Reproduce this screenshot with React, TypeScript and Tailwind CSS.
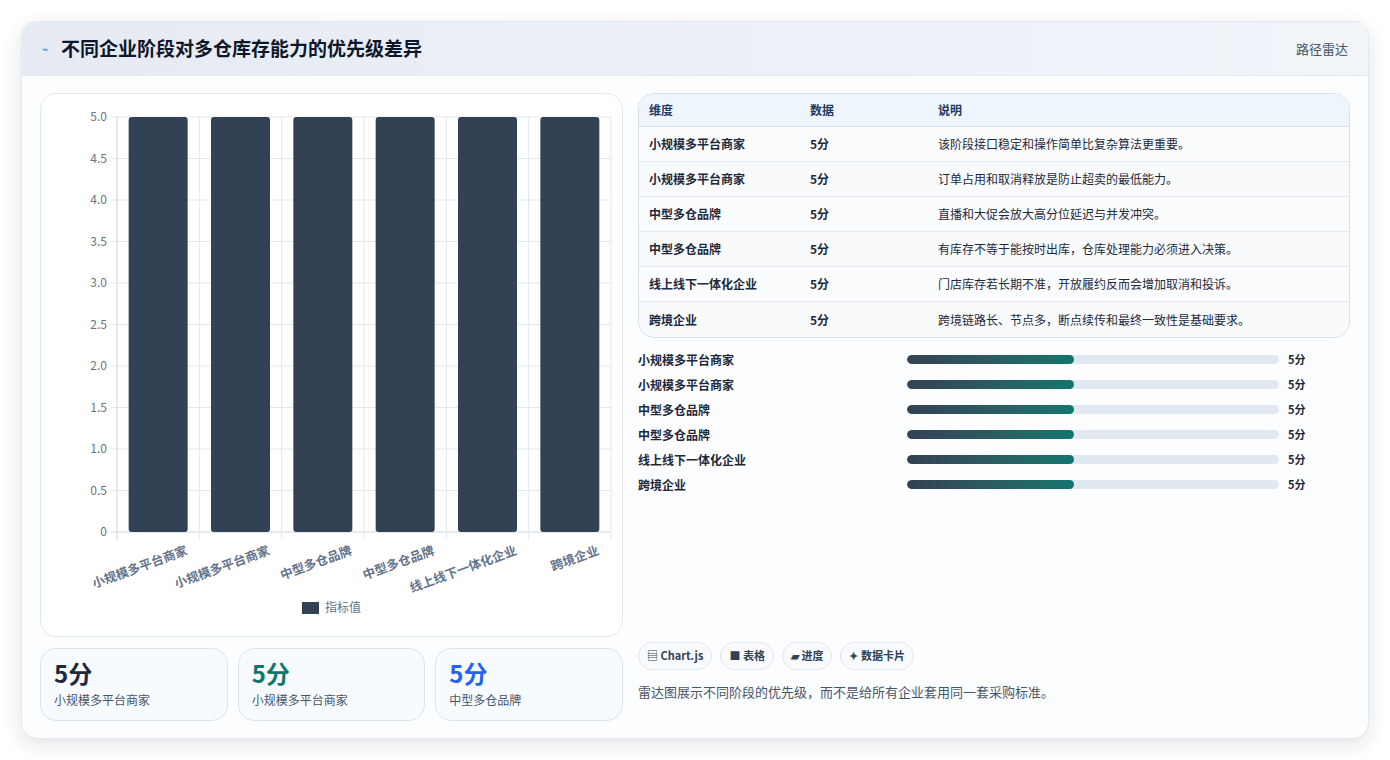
import React from "react";

const rows = [
  ["小规模多平台商家", "5分", "该阶段接口稳定和操作简单比复杂算法更重要。"],
  ["小规模多平台商家", "5分", "订单占用和取消释放是防止超卖的最低能力。"],
  ["中型多仓品牌", "5分", "直播和大促会放大高分位延迟与并发冲突。"],
  ["中型多仓品牌", "5分", "有库存不等于能按时出库，仓库处理能力必须进入决策。"],
  ["线上线下一体化企业", "5分", "门店库存若长期不准，开放履约反而会增加取消和投诉。"],
  ["跨境企业", "5分", "跨境链路长、节点多，断点续传和最终一致性是基础要求。"],
];

const font = { fontFamily: '"Noto Sans CJK SC", "Liberation Sans", sans-serif' };

function Chart() {
  const L = 76, R = 570, T = 23, B = 438;
  const cw = (R - L) / 6;
  const ticks = [5, 4.5, 4, 3.5, 3, 2.5, 2, 1.5, 1, 0.5, 0];
  return (
    <svg width="580" height="540" className="block" style={font}>
      {ticks.map((t, i) => {
        const y = T + (i * (B - T)) / 10;
        return (
          <g key={i}>
            <line x1={L - 6} x2={R} y1={y} y2={y} stroke={i === 10 ? "#cbd5e1" : "#e5e7eb"} />
            <text x={L - 10} y={y + 4} textAnchor="end" fontSize="12" fill="#6b7280">
              {t === 0 ? "0" : t.toFixed(1)}
            </text>
          </g>
        );
      })}
      {Array.from({ length: 7 }).map((_, i) => (
        <line key={i} x1={L + i * cw} x2={L + i * cw} y1={T} y2={B + 8} stroke={i === 0 ? "#cbd5e1" : "#e5e7eb"} />
      ))}
      {rows.map((r, i) => {
        const cx = L + i * cw + cw / 2;
        return (
          <g key={i}>
            <rect x={cx - 29.5} y={T} width={59} height={B - T} rx={3} fill="#334155" />
            <text
              transform={`translate(${cx + 30},${B + 22}) rotate(-20)`}
              textAnchor="end"
              fontSize="12.5"
              fontWeight="600"
              fill="#64748b"
            >
              {r[0]}
            </text>
          </g>
        );
      })}
      <rect x={261} y={508} width={17} height={12} fill="#334155" />
      <text x={284} y={518} fontSize="12" fill="#64748b">指标值</text>
    </svg>
  );
}

export default function App() {
  return (
    <div className="w-[1390px] h-[760px] bg-white pt-[21px] px-[21px]" style={font}>
      <div className="w-[1348px] h-[718px] rounded-2xl border border-[#e2e8f0] bg-[#fcfdfe] shadow-[0_6px_20px_rgba(15,23,42,0.12)] overflow-hidden flex flex-col">
        <div className="h-[54px] shrink-0 flex items-center justify-between px-5 bg-gradient-to-r from-[#e6ebf3] to-[#f1f4f9] border-b border-[#e5e9f0]">
          <div className="flex items-center gap-3">
            <span className="text-[#3b82f6] text-[11px]">⌁</span>
            <span className="text-[19px] font-bold text-[#0f172a]">不同企业阶段对多仓库存能力的优先级差异</span>
          </div>
          <span className="text-[13px] text-[#475569]">路径雷达</span>
        </div>
        <div className="flex gap-[15px] px-[18px] pt-[17px]">
          <div className="w-[583px] flex flex-col gap-[11px]">
            <div className="h-[544px] rounded-2xl border border-[#e2e8f0] bg-white">
              <Chart />
            </div>
            <div className="flex gap-[10px]">
              {[
                ["text-[#1e293b]", "小规模多平台商家"],
                ["text-[#0f766e]", "小规模多平台商家"],
                ["text-[#2563eb]", "中型多仓品牌"],
              ].map(([c, l], i) => (
                <div key={i} className="w-[188px] h-[73px] rounded-2xl border border-[#dbe5f1] bg-[#f8fbfe] px-[13px] pt-[9px]">
                  <div className={`text-[24px] font-bold leading-[30px] ${c}`}>5分</div>
                  <div className="text-[12px] text-[#475569] mt-[3px]">{l}</div>
                </div>
              ))}
            </div>
          </div>
          <div className="flex-1 flex flex-col">
            <div className="rounded-2xl border border-[#d6e0ec] overflow-hidden bg-white">
              <div className="h-[33px] flex items-center bg-[#eef5fd] border-b border-[#d6e0ec] text-[12px] font-bold text-[#1e3a5f]">
                <div className="w-[171px] pl-[10px]">维度</div>
                <div className="w-[128px]">数据</div>
                <div className="flex-1">说明</div>
              </div>
              {rows.map((r, i) => (
                <div key={i} className={`h-[35px] flex items-center text-[12px] text-[#1e293b] ${i % 2 === 1 ? "bg-[#f8fafc]" : "bg-[#fbfcfd]"} ${i < 5 ? "border-b border-[#e5e9f0]" : ""}`}>
                  <div className="w-[171px] pl-[10px] font-semibold">{r[0]}</div>
                  <div className="w-[128px] font-semibold">{r[1]}</div>
                  <div className="flex-1">{r[2]}</div>
                </div>
              ))}
            </div>
            <div className="mt-[9px] flex flex-col">
              {rows.map((r, i) => (
                <div key={i} className="h-[25px] flex items-center text-[12px] font-semibold text-[#1e293b]">
                  <div className="w-[269px]">{r[0]}</div>
                  <div className="w-[372px] h-[9px] rounded-full bg-[#e2e8f0] overflow-hidden">
                    <div className="h-full rounded-full bg-gradient-to-r from-[#334155] to-[#0f766e]" style={{ width: "45%" }} />
                  </div>
                  <div className="ml-[9px] text-[11px]">5分</div>
                </div>
              ))}
            </div>
            <div className="mt-auto flex flex-col gap-[12px] pb-[20px]">
              <div className="flex gap-[8px] text-[11px] font-semibold text-[#334155]">
                {["▤ Chart.js", "■ 表格", "▰ 进度", "✦ 数据卡片"].map((t) => (
                  <span key={t} className="h-[28px] px-[8px] flex items-center rounded-full border border-[#e2e8f0] bg-[#f8fafc]">{t}</span>
                ))}
              </div>
              <div className="text-[13px] text-[#475569]">雷达图展示不同阶段的优先级，而不是给所有企业套用同一套采购标准。</div>
            </div>
          </div>
        </div>
      </div>
    </div>
  );
}
